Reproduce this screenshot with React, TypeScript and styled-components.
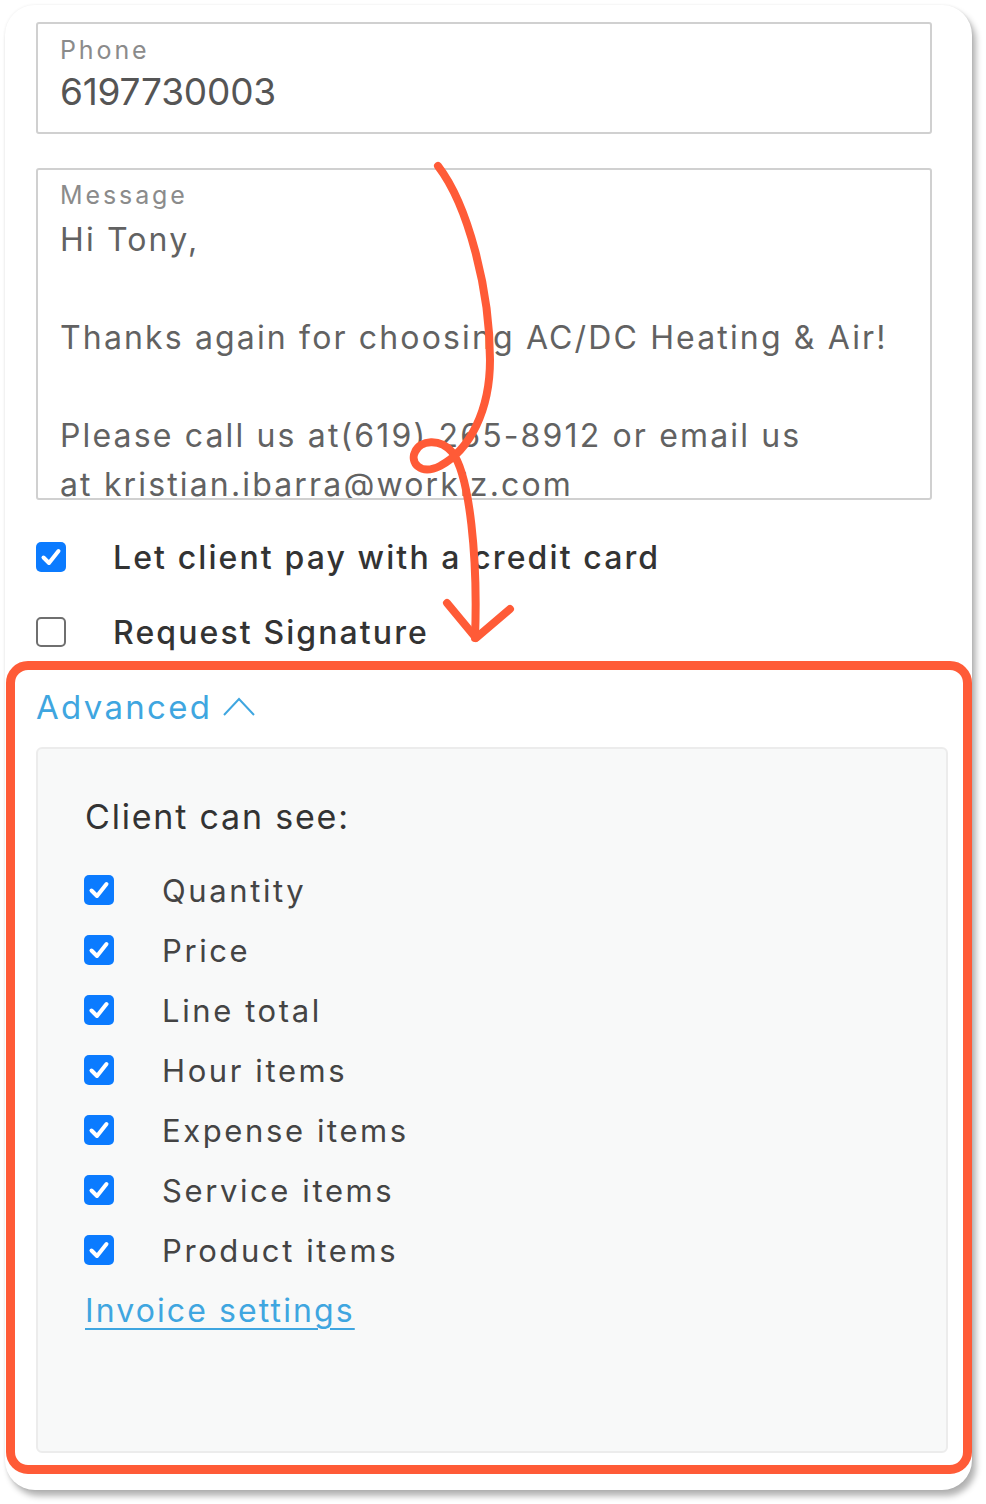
import styled, { createGlobalStyle } from 'styled-components';

const GlobalStyle = createGlobalStyle`
  * {
    box-sizing: border-box;
  }
  body {
    margin: 0;
    background: #ffffff;
    font-family: Inter, "Open Sans", sans-serif;
  }
`;

const Frame = styled.div`
  position: relative;
  width: 986px;
  height: 1504px;
  padding: 5px 14px 14px 5px;
`;

const Card = styled.div`
  display: flex;
  flex-direction: column;
  width: 967px;
  height: 1485px;
  padding: 17px 40px 15px 31px;
  background: #ffffff;
  border-radius: 30px;
  box-shadow: 4px 6px 6px rgba(0, 0, 0, 0.3), 0 0 3px rgba(0, 0, 0, 0.08);
`;

const Field = styled.div<{ $height: number; $top?: number }>`
  height: ${({ $height }) => $height}px;
  margin-top: ${({ $top }) => $top || 0}px;
  padding: 0 22px;
  border: 2px solid #d0d0d0;
  border-radius: 3px;
  overflow: hidden;
`;

const FieldLabel = styled.div<{ $pad: number }>`
  padding-top: ${({ $pad }) => $pad}px;
  font-size: 25px;
  line-height: 28px;
  letter-spacing: 2.9px;
  color: #8b8b8b;
`;

const PhoneValue = styled.div`
  margin-top: 6px;
  font-size: 37px;
  line-height: 44px;
  letter-spacing: -0.2px;
  color: #555555;
`;

const MessageBody = styled.div`
  margin-top: 6px;
  font-size: 32px;
  line-height: 49px;
  letter-spacing: 2.15px;
  color: #626262;
  white-space: pre-line;
`;

const OptionRow = styled.label<{ $top: number }>`
  display: flex;
  align-items: center;
  height: 40px;
  margin-top: ${({ $top }) => $top}px;
`;

const Box = styled.span<{ $checked: boolean }>`
  display: flex;
  align-items: center;
  justify-content: center;
  flex: none;
  width: 30px;
  height: 30px;
  border-radius: 5px;
  background: ${({ $checked }) => ($checked ? '#0b7bff' : '#ffffff')};
  border: ${({ $checked }) => ($checked ? 'none' : '2px solid #6f6f6f')};
`;

const OptionText = styled.span`
  margin-left: 47px;
  font-size: 32px;
  font-weight: 500;
  letter-spacing: 2.1px;
  color: #333333;
`;

const Advanced = styled.section`
  display: flex;
  flex-direction: column;
  margin: 9px -40px 0 -30px;
  padding: 17px 15px 12px 21px;
  border: 9px solid #ff5b37;
  border-radius: 22px;
`;

const Toggle = styled.div`
  display: flex;
  align-items: center;
  gap: 10px;
  height: 40px;
  font-size: 33px;
  letter-spacing: 2.3px;
  color: #3fa6e0;
`;

const Panel = styled.div`
  height: 706px;
  margin-top: 20px;
  padding: 48px 0 0 47px;
  background: #f8f9f9;
  border: 2px solid #ececec;
  border-radius: 6px;
`;

const PanelTitle = styled.div`
  height: 40px;
  font-size: 34px;
  line-height: 40px;
  font-weight: 400;
  letter-spacing: 1.8px;
  color: #333333;
`;

const SeeList = styled.div`
  display: flex;
  flex-direction: column;
  margin-top: 23px;
`;

const SeeRow = styled.label`
  display: flex;
  align-items: center;
  height: 60px;
  margin-left: -1px;
`;

const SeeText = styled.span`
  margin-left: 48px;
  font-size: 31px;
  letter-spacing: 2.6px;
  color: #444444;
`;

const SettingsLink = styled.a`
  display: inline-block;
  margin-top: 11px;
  font-size: 32px;
  line-height: 40px;
  letter-spacing: 2.1px;
  color: #3fa6e0;
  text-decoration: underline;
  text-decoration-thickness: 2px;
  text-underline-offset: 6px;
`;

const Overlay = styled.svg`
  position: absolute;
  top: 0;
  left: 0;
  pointer-events: none;
`;

const Check = ({ checked }: { checked: boolean }) => (
  <Box $checked={checked}>
    {checked && (
      <svg width="24" height="24" viewBox="0 0 24 24">
        <path d="M4.5 12.5 L10 18 L19.5 6" fill="none" stroke="#fff" strokeWidth="4" strokeLinecap="round" strokeLinejoin="round" />
      </svg>
    )}
  </Box>
);

const seeItems = ['Quantity', 'Price', 'Line total', 'Hour items', 'Expense items', 'Service items', 'Product items'];

const message = `Hi Tony,

Thanks again for choosing AC/DC Heating & Air!

Please call us at(619) 265-8912 or email us
at kristian.ibarra@workiz.com`;

const App = () => {
  return (
    <Frame>
      <GlobalStyle />
      <Card>
        <Field $height={112}>
          <FieldLabel $pad={12}>Phone</FieldLabel>
          <PhoneValue>6197730003</PhoneValue>
        </Field>
        <Field $height={332} $top={34}>
          <FieldLabel $pad={11}>Message</FieldLabel>
          <MessageBody>{message}</MessageBody>
        </Field>
        <OptionRow $top={37}>
          <Check checked />
          <OptionText>Let client pay with a credit card</OptionText>
        </OptionRow>
        <OptionRow $top={35}>
          <Check checked={false} />
          <OptionText>Request Signature</OptionText>
        </OptionRow>
        <Advanced>
          <Toggle>
            Advanced
            <svg width="34" height="22" viewBox="0 0 34 22">
              <path d="M2 19 L17 3 L32 19" fill="none" stroke="#3fa6e0" strokeWidth="2" />
            </svg>
          </Toggle>
          <Panel>
            <PanelTitle>Client can see:</PanelTitle>
            <SeeList>
              {seeItems.map((item) => (
                <SeeRow key={item}>
                  <Check checked />
                  <SeeText>{item}</SeeText>
                </SeeRow>
              ))}
            </SeeList>
            <SettingsLink href="#">Invoice settings</SettingsLink>
          </Panel>
        </Advanced>
      </Card>
      {/* hand-drawn annotation arrow */}
      <Overlay width="986" height="1504" viewBox="0 0 986 1504">
        <path
          d="M438 166 C468 205 490 290 490 360 C490 410 470 450 440 466 C420 476 410 462 415 452 C420 440 440 438 452 452 C470 475 478 560 475 638"
          fill="none"
          stroke="#ff5b37"
          strokeWidth="8"
          strokeLinecap="round"
        />
        <path d="M447 603 L476 638 L510 609" fill="none" stroke="#ff5b37" strokeWidth="8" strokeLinecap="round" strokeLinejoin="round" />
      </Overlay>
    </Frame>
  );
};

export default App;
